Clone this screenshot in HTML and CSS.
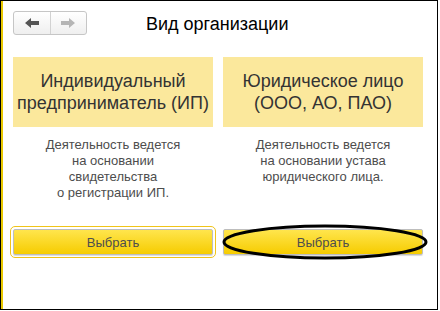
FILE: index.html
```html
<!DOCTYPE html>
<html lang="ru">
<head>
    <meta charset="UTF-8">
    <title>Вид организации</title>
    <link rel="stylesheet" href="styles.css">
</head>
<body>
    <div class="window">
        <div class="header">
            <div class="nav">
                <span class="nav-btn">
                    <svg width="14" height="10" viewBox="0 0 14 10"><path d="M0 5 L6 0 L6 3 L14 3 L14 7 L6 7 L6 10 Z" fill="#555"/></svg>
                </span>
                <span class="nav-btn">
                    <svg width="14" height="10" viewBox="0 0 14 10"><path d="M14 5 L8 0 L8 3 L0 3 L0 7 L8 7 L8 10 Z" fill="#b5b5b5"/></svg>
                </span>
            </div>
            <div class="title">Вид организации</div>
        </div>
        <div class="columns">
            <div class="col">
                <div class="kind">Индивидуальный<br>предприниматель (ИП)</div>
                <div class="desc">Деятельность ведется<br>на основании<br>свидетельства<br>о регистрации ИП.</div>
                <button class="button focused">Выбрать</button>
            </div>
            <div class="col">
                <div class="kind">Юридическое лицо<br>(ООО, АО, ПАО)</div>
                <div class="desc">Деятельность ведется<br>на основании устава<br>юридического лица.</div>
                <div class="mark-wrap">
                    <button class="button">Выбрать</button>
                    <svg class="mark" width="207" height="36" viewBox="0 0 207 36"><ellipse cx="103" cy="18" rx="101" ry="16" fill="none" stroke="#000" stroke-width="3"/></svg>
                </div>
            </div>
        </div>
    </div>
</body>
</html>
```
FILE: styles.css
```css
body {
    margin: 0;
    background: #fff;
    font-family: 'Liberation Sans', Arial, sans-serif;
}
.window {
    box-sizing: border-box;
    width: 438px;
    height: 310px;
    border: 1px solid #000;
    box-shadow: inset 2px 0 0 #e8c800;
    padding: 10px 0 0 12px;
}
.header {
    display: flex;
    align-items: center;
    height: 24px;
}
.nav {
    display: flex;
    width: 74px;
    height: 24px;
    box-sizing: border-box;
    border: 1px solid #c6c6c6;
    border-radius: 3px;
    background: linear-gradient(#ffffff, #efefef);
}
.nav-btn {
    flex: 1;
    display: flex;
    align-items: center;
    justify-content: center;
}
.nav-btn + .nav-btn {
    border-left: 1px solid #d2d2d2;
}
.title {
    margin-left: 59px;
    margin-top: 2px;
    font-size: 18px;
    color: #000;
}
.columns {
    display: flex;
    gap: 10px;
    margin-top: 22px;
}
.col {
    width: 200px;
    display: flex;
    flex-direction: column;
    align-items: center;
}
.kind {
    width: 200px;
    height: 70px;
    background: #fbe89c;
    color: #333;
    font-size: 18px;
    line-height: 22px;
    text-align: center;
    display: flex;
    align-items: center;
    justify-content: center;
}
.desc {
    margin-top: 10px;
    height: 92px;
    font-size: 13px;
    line-height: 16px;
    color: #4d4d4d;
    text-align: center;
}
.button {
    display: block;
    width: 200px;
    height: 26px;
    border: 1px solid #bdbdbd;
    border-radius: 2px;
    background: linear-gradient(#ffe54d, #f6cc00);
    box-shadow: 0 1px 1px rgba(0, 0, 0, 0.15);
    color: #4d4d4d;
    font-family: 'Liberation Sans', Arial, sans-serif;
    font-size: 13px;
    padding: 0;
    cursor: pointer;
}
.focused {
    outline: 1px solid #f0c419;
    outline-offset: 2px;
}
.mark-wrap {
    position: relative;
}
.mark {
    position: absolute;
    left: -1px;
    top: -5px;
}
```
